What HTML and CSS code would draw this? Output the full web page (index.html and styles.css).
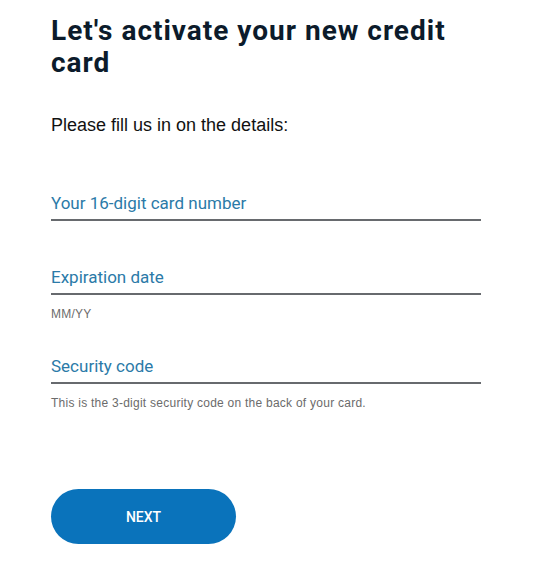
FILE: index.html
```html
<!DOCTYPE html>
<html lang="en">
<head>
    <meta charset="UTF-8">
    <meta name="viewport" content="width=device-width, initial-scale=1.0">
    <title>Activate your card</title>
    <link rel="stylesheet" href="styles.css">
</head>
<body>
    <div class="container">
        <h1 class="title">Let's activate your new credit card</h1>
        <p class="intro">Please fill us in on the details:</p>

        <div class="field">
            <label for="card">Your 16-digit card number</label>
            <input type="text" id="card">
        </div>

        <div class="field with-hint">
            <label for="expiry">Expiration date</label>
            <input type="text" id="expiry">
            <span class="hint">MM/YY</span>
        </div>

        <div class="field with-hint">
            <label for="cvv">Security code</label>
            <input type="text" id="cvv">
            <span class="hint">This is the 3-digit security code on the back of your card.</span>
        </div>

        <button class="next">NEXT</button>
    </div>
</body>
</html>
```

FILE: styles.css
```css
body {
    margin: 0;
    background-color: #fff;
    font-family: Roboto, Arial, sans-serif;
}

.container {
    width: 430px;
    padding: 15px 0 0 51px;
}

.title {
    margin: 0;
    font-size: 28px;
    line-height: 32px;
    font-weight: 700;
    letter-spacing: 1px;
    color: #0c1b2b;
}

.intro {
    margin: 36px 0 0;
    font-family: "Liberation Sans", Arial, sans-serif;
    font-size: 18px;
    color: #111;
}

.field {
    display: flex;
    flex-direction: column;
    margin-top: 57px;
}

.field + .field {
    margin-top: 46px;
}

.with-hint + .field {
    margin-top: 35px;
}

.field label {
    font-size: 17px;
    line-height: 20px;
    color: #2b7aa8;
}

.field input {
    height: 6px;
    padding: 0;
    border: none;
    border-bottom: 2px solid #676a6e;
    outline: none;
}

.hint {
    margin-top: 12px;
    font-family: "Liberation Sans", Arial, sans-serif;
    font-size: 12px;
    letter-spacing: 0.25px;
    color: #6b6b6b;
}

.next {
    margin-top: 79px;
    width: 185px;
    height: 55px;
    border: none;
    border-radius: 28px;
    background-color: #0a73bb;
    color: #fff;
    font-family: Roboto, Arial, sans-serif;
    font-size: 14px;
    font-weight: 500;
    cursor: pointer;
}
```
